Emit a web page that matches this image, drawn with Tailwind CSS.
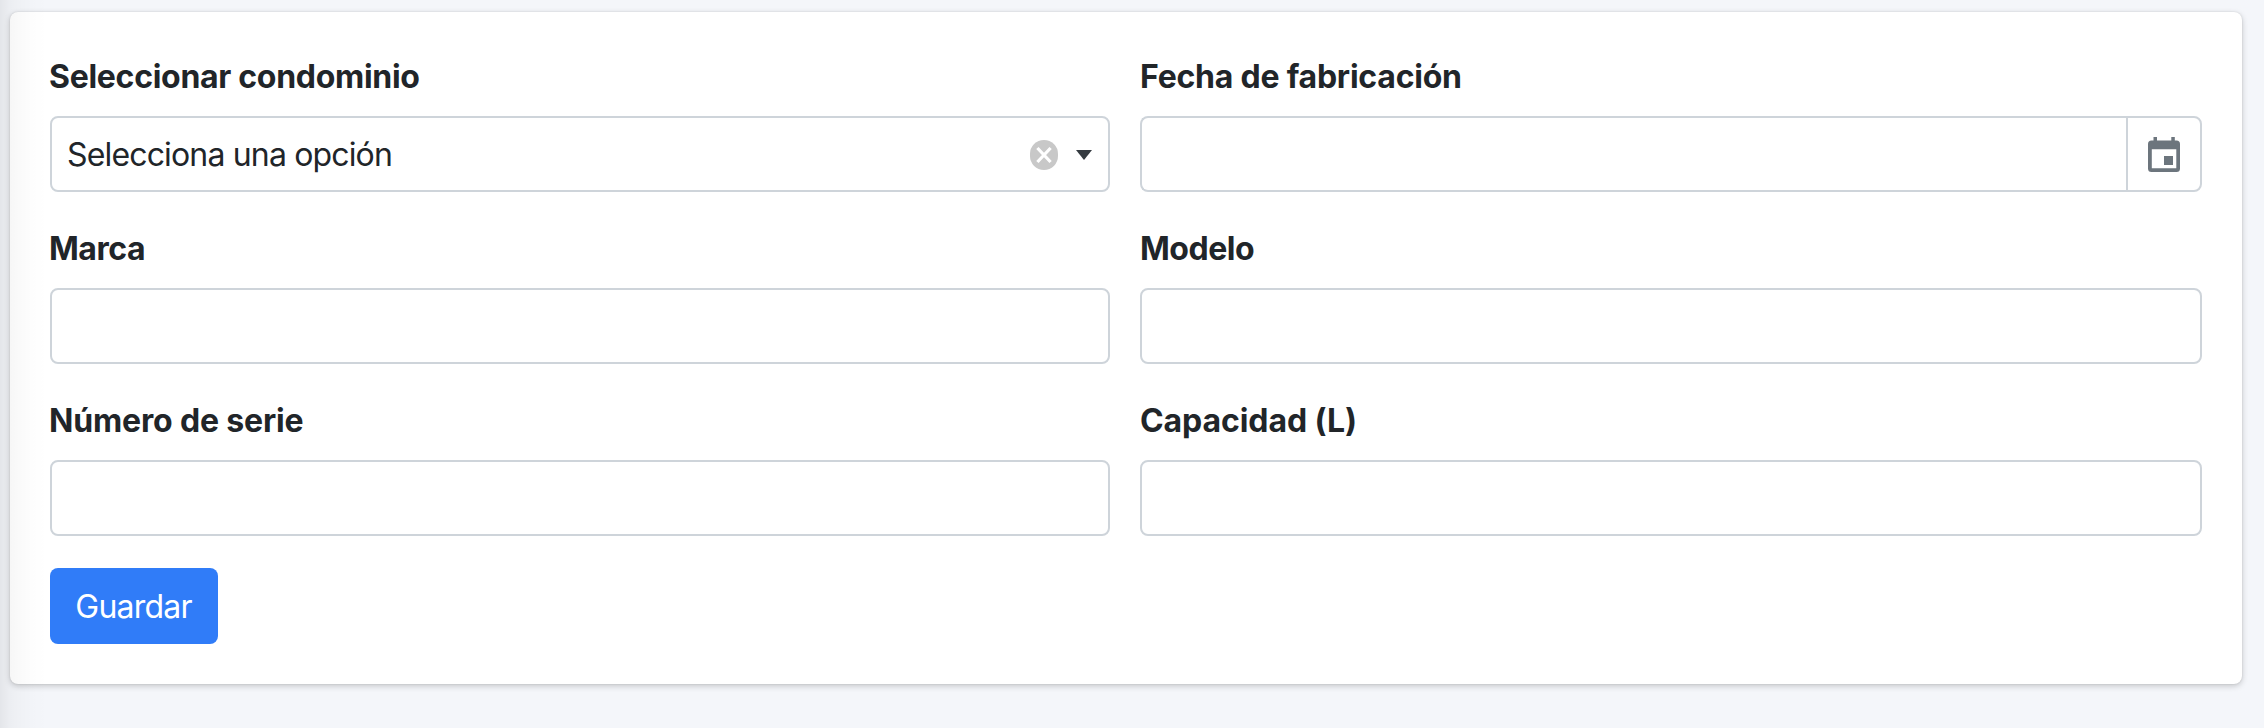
<!DOCTYPE html>
<html lang="es">
<head>
<meta charset="utf-8">
<title>Formulario</title>
<script src="https://cdn.jsdelivr.net/npm/@tailwindcss/browser@4"></script>
</head>
<body class="relative h-[728px] overflow-hidden bg-[#f4f6fa] pt-3 pl-2.5 font-['Inter',sans-serif] text-[32px] leading-[48px] text-[#212529]">
<form class="h-[672px] w-[2232px] rounded-[8px] bg-white p-10 shadow-[0_0_2px_rgba(0,0,0,0.125),0_2px_6px_rgba(0,0,0,0.2)]">
  <div class="grid grid-cols-[1060px_1062px] gap-x-[30px] gap-y-8">
    <div class="flex flex-col gap-[15px]">
      <label class="-ml-px pt-px font-bold tracking-[-0.29px]">Seleccionar condominio</label>
      <div class="flex h-[76px] items-center rounded-[8px] border-2 border-[#ced4da] bg-white pr-4 pl-[15px]">
        <span class="flex-1 pt-0.5 font-[430] tracking-[-0.84px]">Selecciona una opción</span>
        <svg class="mt-0.5 mr-[18px] h-[30px] w-7" viewBox="0 0 28 30">
          <rect width="28" height="30" rx="14" fill="#c8c8c8"/>
          <path d="M7.400 8l13.200 14M20.600 8L7.400 22" stroke="#fff" stroke-width="3.2" fill="none"/>
        </svg>
        <svg class="mt-0.5 h-2.5 w-4" viewBox="0 0 16 10"><path d="M0 0h16L8 10z" fill="#343a40"/></svg>
      </div>
    </div>
    <div class="flex flex-col gap-[15px]">
      <label class="pt-px font-bold tracking-[-0.22px]">Fecha de fabricación</label>
      <div class="flex h-[76px]">
        <input type="text" class="h-full min-w-0 flex-1 rounded-l-[8px] border-2 border-r-0 border-[#ced4da] bg-white px-4">
        <button type="button" class="flex h-full w-[76px] items-center justify-center rounded-r-[8px] border-2 border-[#ced4da] bg-white">
          <svg class="mt-px h-[35px] w-8" viewBox="0 0 32 35" fill="#6c757d">
            <path fill-rule="evenodd" d="M5.500 0h3.500v3.500h14.300V0h3.500v3.500h1.700A3.500 3.500 0 0 1 32 7v24.500A3.500 3.500 0 0 1 28.500 35h-25A3.500 3.500 0 0 1 0 31.500V7a3.500 3.500 0 0 1 3.500-3.500H5.500zM3.800 12.200v19h24.500v-19z"/>
            <path d="M16 19h9v9h-9z"/>
          </svg>
        </button>
      </div>
    </div>
    <div class="flex flex-col gap-[15px]">
      <label class="-ml-px pt-px font-bold tracking-[-0.44px]">Marca</label>
      <input type="text" class="h-[76px] rounded-[8px] border-2 border-[#ced4da] bg-white px-4">
    </div>
    <div class="flex flex-col gap-[15px]">
      <label class="pt-px font-bold tracking-[-0.45px]">Modelo</label>
      <input type="text" class="h-[76px] rounded-[8px] border-2 border-[#ced4da] bg-white px-4">
    </div>
    <div class="flex flex-col gap-[15px]">
      <label class="-ml-px pt-px font-bold tracking-[-0.16px]">Número de serie</label>
      <input type="text" class="h-[76px] rounded-[8px] border-2 border-[#ced4da] bg-white px-4">
    </div>
    <div class="flex flex-col gap-[15px]">
      <label class="pt-px font-bold tracking-[-0.08px]">Capacidad (L)</label>
      <input type="text" class="h-[76px] rounded-[8px] border-2 border-[#ced4da] bg-white px-4">
    </div>
  </div>
  <button type="submit" class="mt-8 flex h-[76px] w-[168px] items-center justify-center rounded-[8px] bg-[#307cf8] pt-0.5 pr-px font-[430] tracking-[-0.8px] text-white">Guardar</button>
</form>
<!-- Soft shade cast by the sidebar edge -->
<div class="pointer-events-none absolute inset-y-0 left-0 w-12 bg-[linear-gradient(to_right,rgba(0,0,0,0.065)_0px,rgba(0,0,0,0.035)_9px,rgba(0,0,0,0.024)_16px,rgba(0,0,0,0.008)_32px,rgba(0,0,0,0)_48px)]"></div>
</body>
</html>
